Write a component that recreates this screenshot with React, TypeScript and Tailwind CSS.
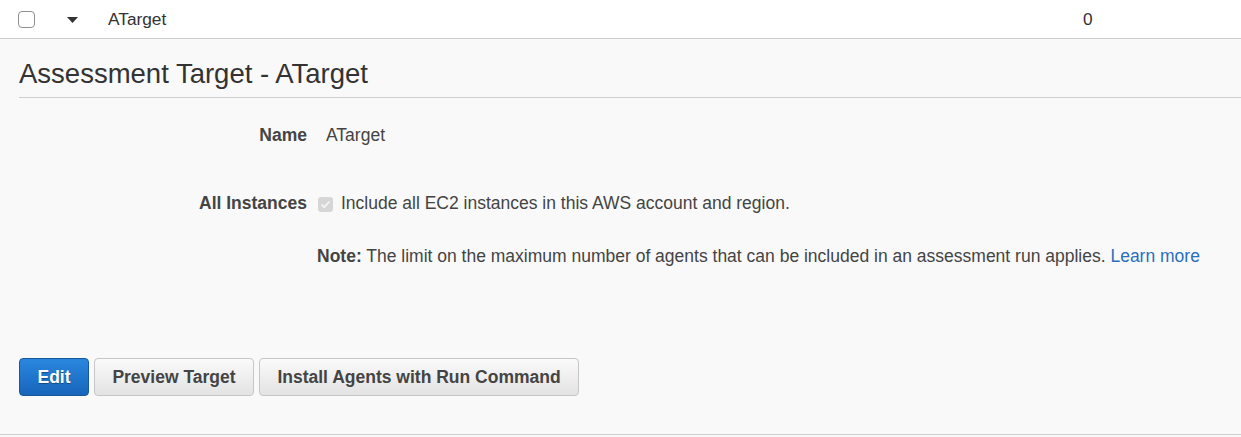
import React from "react";

export default function App() {
  return (
    <div className="w-[1241px] h-[437px] overflow-hidden bg-[#f9f9f9] text-[#444] font-['Liberation_Sans',Arial,sans-serif]">
      {/* top table row */}
      <div className="h-[39px] bg-white border-b border-[#cfcfcf] flex items-center">
        <div className="ml-[18px] w-[17px] h-[17px] rounded-[4px] border border-[#8f8f8f] bg-white mt-[1px]" />
        <svg className="ml-[32px] mt-[1px]" width="11" height="6" viewBox="0 0 11 6">
          <path d="M0 0 L11 0 L5.5 6 Z" fill="#333" />
        </svg>
        <div className="ml-[30px] w-[975px] text-[17.3px] leading-[20px] text-[#333]">ATarget</div>
        <div className="text-[17.3px] leading-[20px] text-[#333]">0</div>
      </div>

      {/* detail panel */}
      <div className="pl-[19px] pt-[19px]">
        <div className="text-[27.5px] leading-[32px] text-[#333] pb-[7px] border-b border-[#cfcfcf]">
          Assessment Target - ATarget
        </div>

        <div className="mt-[27px] flex items-center text-[17.5px] leading-[20px]">
          <div className="w-[288px] text-right font-bold">Name</div>
          <div className="ml-[19px]">ATarget</div>
        </div>

        <div className="mt-[48px] flex items-start text-[17.5px] leading-[20px]">
          <div className="w-[288px] text-right font-bold">All Instances</div>
          <div className="ml-[11px] flex flex-col">
            <div className="flex items-center">
              <div className="w-[15px] h-[15px] rounded-[3px] bg-[#d6d6d6] flex items-center justify-center mt-[3px]">
                <svg width="11" height="9" viewBox="0 0 11 9">
                  <path d="M1.5 4.5 L4.2 7.2 L9.5 1.5" stroke="#f4f4f4" strokeWidth="1.8" fill="none" />
                </svg>
              </div>
              <span className="ml-[8px]">Include all EC2 instances in this AWS account and region.</span>
            </div>
            <div className="mt-[33px] -ml-[1px]">
              <span className="font-bold">Note:</span> The limit on the maximum number of agents that can be included in an assessment run applies.{" "}
              <span className="text-[#2a6ebf]">Learn more</span>
            </div>
          </div>
        </div>

        <div className="mt-[92px] flex gap-[5px] text-[17.5px] font-bold">
          <button className="h-[38px] w-[70px] rounded-[4px] border border-[#17589c] bg-gradient-to-b from-[#2a87de] to-[#1765bb] text-white [text-shadow:0_1px_1px_rgba(0,0,0,0.35)]">
            Edit
          </button>
          <button className="h-[38px] w-[160px] rounded-[4px] border border-[#c6c6c6] bg-gradient-to-b from-[#fafafa] to-[#e3e3e3] text-[#444]">
            Preview Target
          </button>
          <button className="h-[38px] w-[320px] rounded-[4px] border border-[#c6c6c6] bg-gradient-to-b from-[#fafafa] to-[#e3e3e3] text-[#444]">
            Install Agents with Run Command
          </button>
        </div>
      </div>
      <div className="mt-[38px] border-b border-[#cfcfcf]" />
    </div>
  );
}
